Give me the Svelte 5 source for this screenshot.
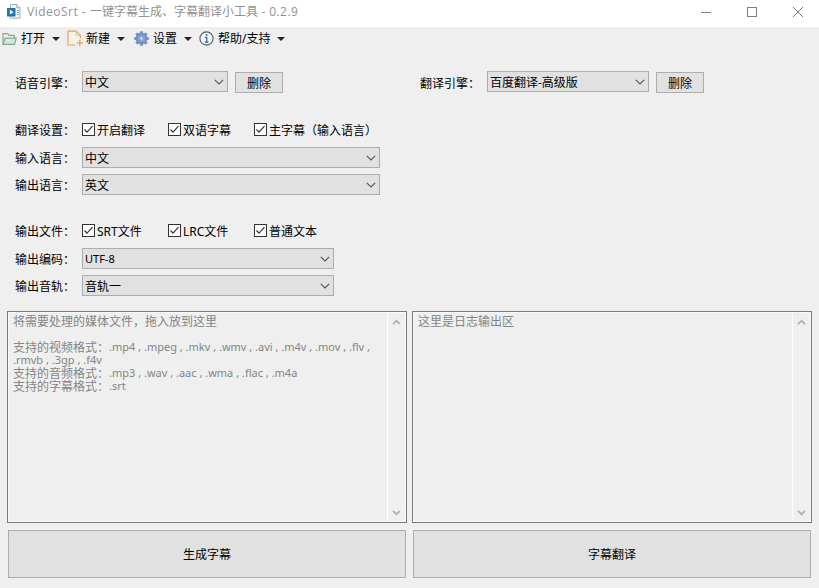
<script>
  const engines = [
    { label: '语音引擎', value: '中文', width: 146 },
    { label: '翻译引擎', value: '百度翻译-高级版', width: 162 }
  ];
  const translateChecks = ['开启翻译', '双语字幕', '主字幕（输入语言）'];
  const fileChecks = ['SRT文件', 'LRC文件', '普通文本'];
  const languages = [
    { label: '输入语言', value: '中文' },
    { label: '输出语言', value: '英文' }
  ];
  const outputs = [
    { label: '输出编码', value: 'UTF-8' },
    { label: '输出音轨', value: '音轨一' }
  ];
  const actions = ['生成字幕', '字幕翻译'];
</script>

{#snippet colon()}<span class="colon">：</span>{/snippet}

{#snippet combo(value, width)}
  <div class="combo" style:width="{width}px">
    <span class:latin={value === 'UTF-8'}>{value}</span>
    <svg width="10" height="6" viewBox="0 0 10 6"><path d="M.8 .8 5 5 9.2 .8" /></svg>
  </div>
{/snippet}

{#snippet checks(label, items)}
  <div class="row checks">
    <span class="label">{label}{@render colon()}</span>
    {#each items as item}
      <div class="check">
        <svg width="13" height="13" viewBox="0 0 13 13">
          <rect x=".5" y=".5" width="12" height="12" />
          <path d="M2.5 6.5 5 9.2 10.5 3.2" />
        </svg>
        <span>{item}</span>
      </div>
    {/each}
  </div>
{/snippet}

{#snippet caret()}
  <svg class="caret" width="8" height="4" viewBox="0 0 8 4"><path d="M0 0H8L4 4Z" /></svg>
{/snippet}

{#snippet scrollbar()}
  <div class="scrollbar">
    <svg width="9" height="7" viewBox="0 0 9 7"><path d="M1 5.2 4.5 1.8 8 5.2" /></svg>
    <svg width="9" height="7" viewBox="0 0 9 7"><path d="M1 1.8 4.5 5.2 8 1.8" /></svg>
  </div>
{/snippet}

<div class="window" lang="zh-CN">
  <header class="titlebar">
    <svg class="logo" width="14" height="15" viewBox="0 0 14 15">
      <path d="M3.5 .5H10L13 3.5V14.2H3.5Z" fill="#f5f8fa" stroke="#9aafbd" />
      <path d="M9.7 .5V3.8H13" fill="none" stroke="#9aafbd" />
      <path d="M10 6.5H12M10 8.5H12M10 10.5H12" stroke="#7f9fb5" />
      <rect x="0" y="4" width="8.5" height="8.5" fill="#2277ac" />
      <path d="M2.8 5.8V10.6L6.6 8.2Z" fill="#fff" />
    </svg>
    <div class="title"><span class="name">VideoSrt - </span><span>一键字幕生成、字幕翻译小工具</span><span class="version">&nbsp;- 0.2.9</span></div>
    <div class="controls">
      <svg width="12" height="12" viewBox="0 0 12 12"><path d="M1 6.5H11" /></svg>
      <svg width="12" height="12" viewBox="0 0 12 12"><rect x="1.5" y="1.5" width="9" height="9" /></svg>
      <svg width="12" height="12" viewBox="0 0 12 12"><path d="M1 1 11 11M11 1 1 11" /></svg>
    </div>
  </header>

  <nav class="toolbar">
    <div class="tool open">
      <svg width="15" height="14" viewBox="0 0 15 14" fill="none" stroke="#86a892" stroke-width="1.2">
        <path d="M1 12.3V1.7H5.5L7 3.4H12.3V6" />
        <path d="M1 12.3 3.2 6.2H14.2L12.5 12.3Z" fill="#d7e7db" />
      </svg>
      <span>打开</span>{@render caret()}
    </div>
    <div class="tool new">
      <svg width="17" height="17" viewBox="0 0 17 17" fill="none" stroke="#dda852" stroke-width="1.2">
        <path d="M8.5 15H1V1.2H9.2L13.3 5.3V9" fill="#f5f1e8" stroke="none" />
        <path d="M8.3 15H1V1.2H9.2L13.3 5.3V8.5" />
        <path d="M9.2 1.2V5.3H13.3" stroke="#ecca91" />
        <path d="M12.8 9.8V16M9.7 12.9H16" />
      </svg>
      <span>新建</span>{@render caret()}
    </div>
    <div class="tool settings">
      <svg width="15" height="15" viewBox="0 0 15 15">
        <g fill="#7193c4">
          <circle cx="7.5" cy="7.5" r="5.7" />
          {#each [0, 45, 90, 135, 180, 225, 270, 315] as angle}
            <rect x="5.9" y=".3" width="3.2" height="3.4" rx=".6" transform="rotate({angle} 7.5 7.5)" />
          {/each}
        </g>
        <circle cx="7.5" cy="7.5" r="3.6" fill="#87a4cd" />
        <circle cx="7.5" cy="7.5" r="1.4" fill="#c9d6e8" />
      </svg>
      <span>设置</span>{@render caret()}
    </div>
    <div class="tool help">
      <svg width="15" height="15" viewBox="0 0 15 15">
        <circle cx="7.5" cy="7.5" r="6.6" fill="#f4f7fc" stroke="#4f596a" stroke-width="1.1" />
        <circle cx="7.5" cy="4" r="1" fill="#4167ae" />
        <path d="M6 6.3H7.7V10.7M5.8 11H9.4" fill="none" stroke="#4167ae" stroke-width="1.3" />
      </svg>
      <span>帮助/支持</span>{@render caret()}
    </div>
  </nav>

  <main>
    <div class="engines">
      {#each engines as engine}
        <div class="row">
          <span class="label">{engine.label}{@render colon()}</span>
          {@render combo(engine.value, engine.width)}
          <button class="delete">删除</button>
        </div>
      {/each}
    </div>

    <section class="group">
      {@render checks('翻译设置', translateChecks)}
      {#each languages as item}
        <div class="row"><span class="label">{item.label}{@render colon()}</span>{@render combo(item.value, 298)}</div>
      {/each}
    </section>

    <section class="group second">
      {@render checks('输出文件', fileChecks)}
      {#each outputs as item}
        <div class="row"><span class="label">{item.label}{@render colon()}</span>{@render combo(item.value, 252)}</div>
      {/each}
    </section>

    <div class="panels">
      <div class="panel">
        <div class="text">
          <div>将需要处理的媒体文件，拖入放到这里</div>
          <div>&nbsp;</div>
          <div>支持的视频格式{@render colon()}<span class="ext">.mp4 , .mpeg , .mkv , .wmv , .avi , .m4v , .mov , .flv ,</span></div>
          <div><span class="ext">.rmvb , .3gp , .f4v</span></div>
          <div>支持的音频格式{@render colon()}<span class="ext">.mp3 , .wav , .aac , .wma , .flac , .m4a</span></div>
          <div>支持的字幕格式{@render colon()}<span class="ext">.srt</span></div>
        </div>
        {@render scrollbar()}
      </div>
      <div class="panel">
        <div class="text"><div>这里是日志输出区</div></div>
        {@render scrollbar()}
      </div>
    </div>

    <div class="actions">
      {#each actions as action}
        <button>{action}</button>
      {/each}
    </div>
  </main>
</div>

<style>
  .window {
    width: 819px;
    height: 588px;
    overflow: hidden;
    background: #efefef;
    color: #000;
    font: 12px/14px "Noto Sans", "Noto Sans CJK SC", sans-serif;
    white-space: nowrap;
  }
  svg { display: block; flex: none; }
  .colon { display: inline-block; width: 12px; height: 13px; line-height: inherit; vertical-align: top; }
  .titlebar {
    display: flex;
    align-items: center;
    height: 27px;
    padding: 0 15px 4px 7px;
    box-sizing: border-box;
    background: #fff;
    color: #929292;
  }
  .title { display: flex; margin-left: 6px; }
  .name { width: 63px; white-space: pre; font-family: "Open Sans", sans-serif; letter-spacing: .5px; }
  .version { font-family: "Open Sans", sans-serif; letter-spacing: .4px; }
  .controls { display: flex; gap: 34px; margin-left: auto; }
  .controls svg { fill: none; stroke: #7d7d7d; }
  .toolbar { display: flex; height: 23px; padding-left: 2px; }
  .tool { display: flex; align-items: center; width: 65px; }
  .tool svg:first-child { margin-right: 4px; }
  .tool svg.caret { margin: 0 0 0 6.5px; }
  .tool.new { width: 67px; }
  .tool.new svg:first-child { margin-right: 2px; }
  .tool.settings { width: 65px; }
  .tool.help { width: 90px; }
  .caret { fill: #222; }
  .engines { display: flex; padding-top: 21px; }
  .row { display: flex; align-items: center; height: 21px; padding-left: 15px; }
  .engines .row { width: 405px; box-sizing: border-box; }
  .label { width: 67px; height: 14px; margin-top: 2px; flex: none; }
  .engines .label { margin-top: 4px; }
  .combo {
    display: flex;
    align-items: center;
    justify-content: space-between;
    flex: none;
    height: 21px;
    box-sizing: border-box;
    padding: 0 3px 0 2px;
    border: 1px solid #adadad;
    background: #e1e1e1;
  }
  .combo > span { padding-top: 2px; }
  .combo svg { fill: none; stroke: #555; stroke-width: 1.1; }
  .combo .latin { padding-top: 1px; font-size: 11px; }
  button {
    padding: 1px 0 0;
    border: 1px solid #adadad;
    border-radius: 0;
    background: #e1e1e1;
    color: #000;
    font: inherit;
  }
  .delete { width: 48px; height: 21px; padding-top: 2px; margin: 2px 0 0 7px; }
  .group { display: grid; gap: 6px; padding-top: 27px; }
  .group.second { padding-top: 25px; }
  .checks { height: 22px; }
  .checks .label { margin-top: 2px; }
  .check { display: flex; align-items: center; width: 86px; height: 20px; gap: 2px; }
  .check svg { margin-bottom: 1px; fill: #fff; stroke: #333; }
  .check span { padding-top: 1px; }
  .check path { fill: none; stroke-width: 1.2; }
  .panels { display: flex; gap: 5px; padding: 15px 7px 0; }
  .panel {
    display: flex;
    width: 400px;
    height: 212px;
    box-sizing: border-box;
    border: 1px solid #7a7a7a;
    box-shadow: inset 0 0 0 1px #f9f9f9;
    color: #858585;
  }
  .text { flex: 1; padding: 3px 0 0 5px; line-height: 13px; }
  .text > div { height: 13px; }
  .ext { font-size: 11px; line-height: 11px; vertical-align: 1px; }
  .scrollbar {
    display: flex;
    flex-direction: column;
    align-items: center;
    justify-content: space-between;
    width: 19px;
    box-sizing: border-box;
    padding: 7px 2px 6px 0;
    border-left: 1px solid #fff;
  }
  .scrollbar svg { fill: none; stroke: #b2b2b2; stroke-width: 1.8; }
  .actions { display: flex; gap: 7px; padding: 7px 8px 0; }
  .actions button { width: 398px; height: 48px; }
</style>
